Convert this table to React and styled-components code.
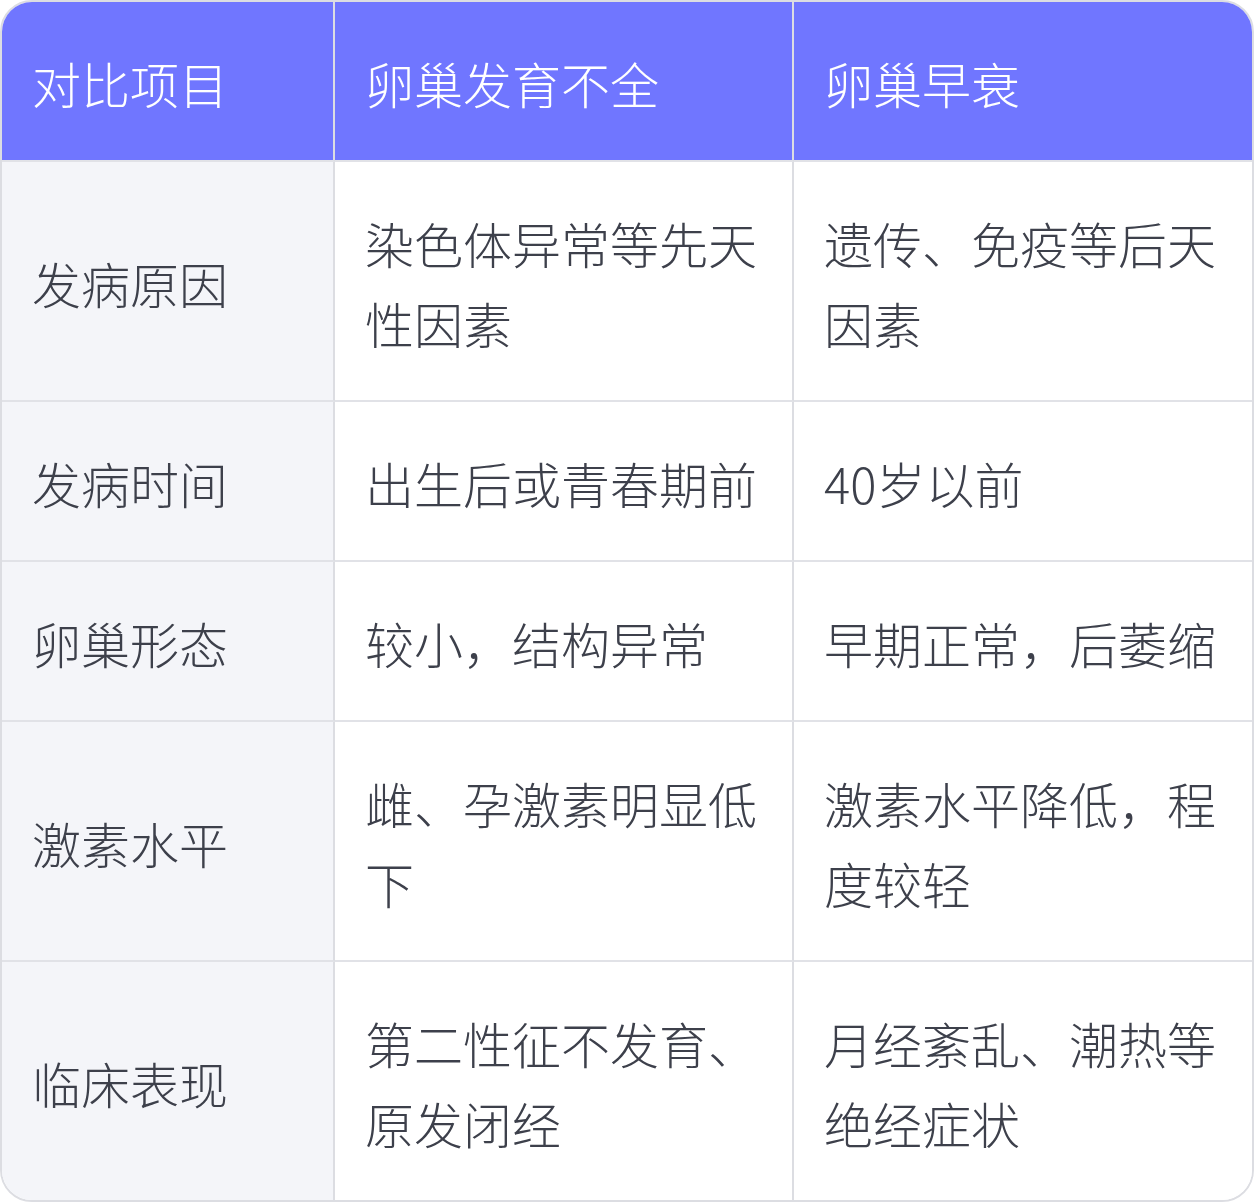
import React from "react";
import styled, { createGlobalStyle } from "styled-components";

const GlobalStyle = createGlobalStyle`
  html, body {
    margin: 0;
    padding: 0;
    background: #ffffff;
  }
  body {
    font-family: "Noto Sans CJK SC", "Noto Sans", sans-serif;
  }
`;

const Table = styled.div`
  width: 1254px;
  box-sizing: border-box;
  border: 2px solid #dcdde2;
  border-radius: 32px;
  overflow: hidden;
  display: grid;
  grid-template-columns: 333px 459px 1fr;
`;

const Cell = styled.div`
  box-sizing: border-box;
  padding: 41px 30px 37px;
  font-size: 49px;
  line-height: 80px;
  font-weight: 300;
  color: ${(p) => (p.$head ? "#ffffff" : "#3d404b")};
  background: ${(p) => (p.$head ? "#7076ff" : p.$label ? "#f4f5f9" : "#ffffff")};
  border-right: ${(p) => (p.$last ? "none" : "2px solid #dcdde2")};
  border-bottom: ${(p) => (p.$bottom ? "none" : "2px solid #e1e2e7")};
  display: flex;
  align-items: center;
  word-break: break-all;
`;

const CellText = styled.span`
  display: block;
`;

const header = ["对比项目", "卵巢发育不全", "卵巢早衰"];

const rows = [
  ["发病原因", "染色体异常等先天性因素", "遗传、免疫等后天因素"],
  ["发病时间", "出生后或青春期前", "40岁以前"],
  ["卵巢形态", "较小，结构异常", "早期正常，后萎缩"],
  ["激素水平", "雌、孕激素明显低下", "激素水平降低，程度较轻"],
  ["临床表现", "第二性征不发育、原发闭经", "月经紊乱、潮热等绝经症状"],
];

export default function App() {
  return (
    <>
      <GlobalStyle />
      <Table>
        {header.map((h, i) => (
          <Cell key={h} $head $last={i === 2}>
            <CellText>{h}</CellText>
          </Cell>
        ))}
        {rows.map((row, r) =>
          row.map((c, i) => (
            <Cell
              key={r + "-" + i}
              $label={i === 0}
              $last={i === 2}
              $bottom={r === rows.length - 1}
            >
              <CellText>{c}</CellText>
            </Cell>
          ))
        )}
      </Table>
    </>
  );
}
